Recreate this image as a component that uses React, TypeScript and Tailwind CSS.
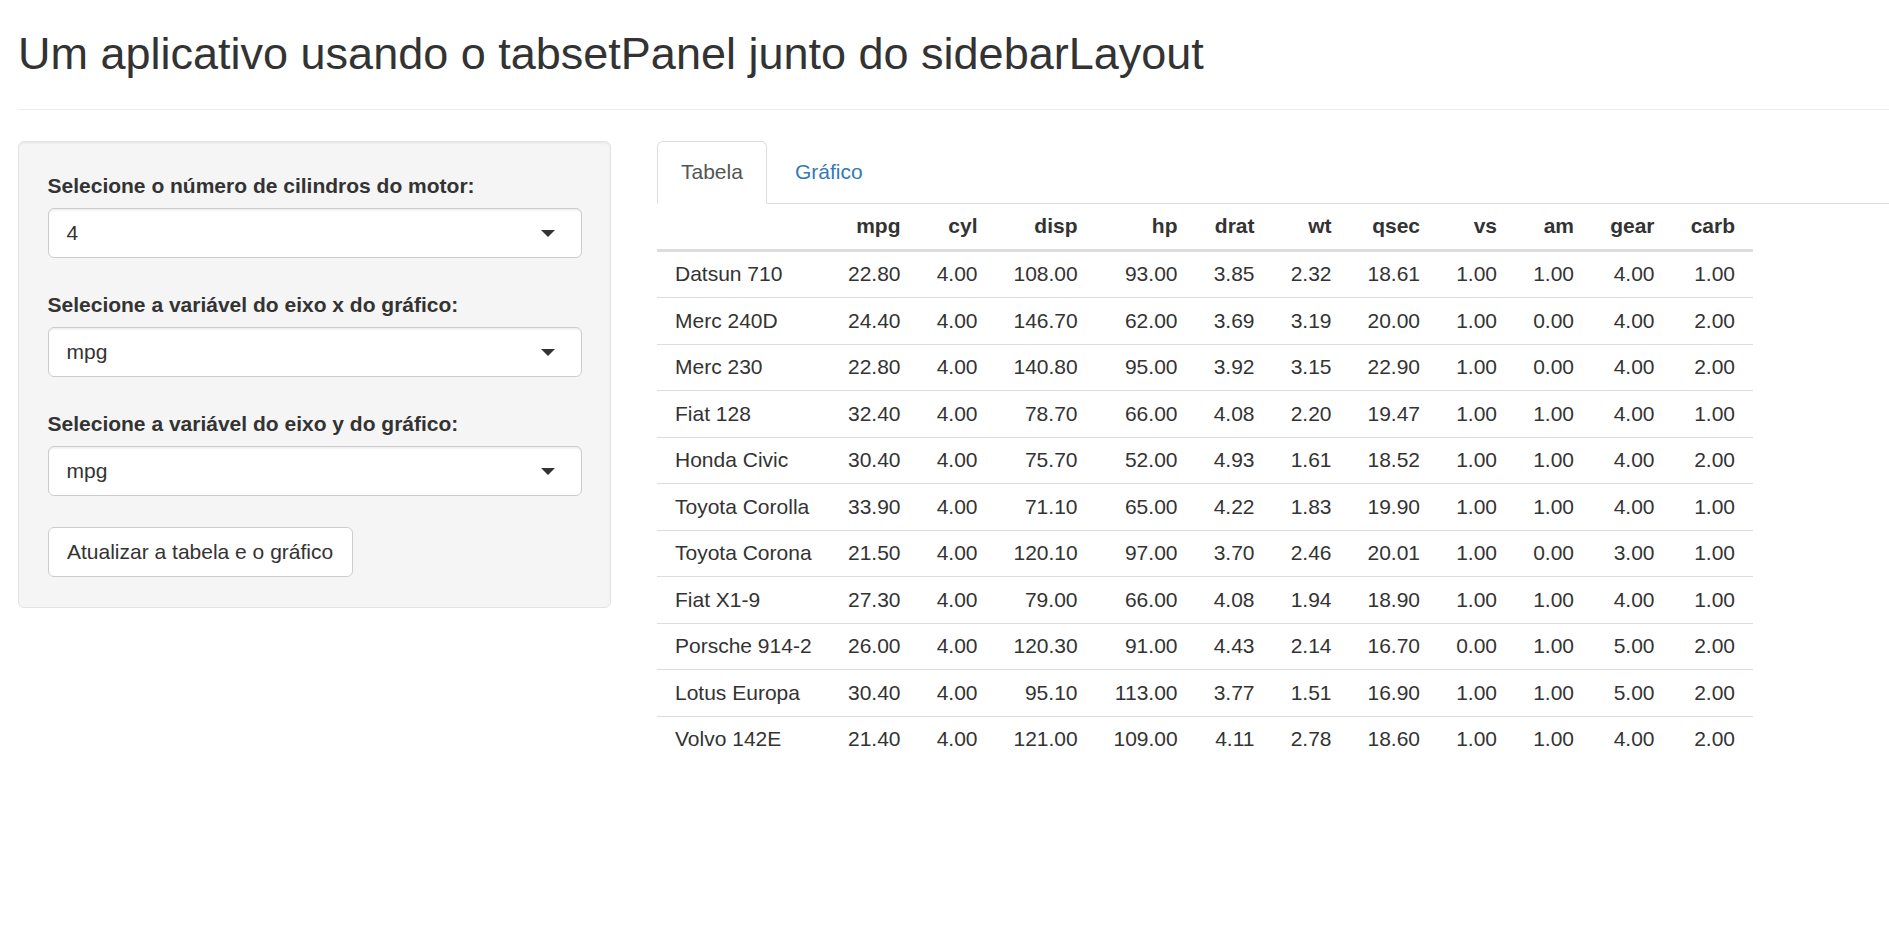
import React from "react";

const cols = ["mpg", "cyl", "disp", "hp", "drat", "wt", "qsec", "vs", "am", "gear", "carb"];

const rows: [string, string[]][] = [
  ["Datsun 710", ["22.80", "4.00", "108.00", "93.00", "3.85", "2.32", "18.61", "1.00", "1.00", "4.00", "1.00"]],
  ["Merc 240D", ["24.40", "4.00", "146.70", "62.00", "3.69", "3.19", "20.00", "1.00", "0.00", "4.00", "2.00"]],
  ["Merc 230", ["22.80", "4.00", "140.80", "95.00", "3.92", "3.15", "22.90", "1.00", "0.00", "4.00", "2.00"]],
  ["Fiat 128", ["32.40", "4.00", "78.70", "66.00", "4.08", "2.20", "19.47", "1.00", "1.00", "4.00", "1.00"]],
  ["Honda Civic", ["30.40", "4.00", "75.70", "52.00", "4.93", "1.61", "18.52", "1.00", "1.00", "4.00", "2.00"]],
  ["Toyota Corolla", ["33.90", "4.00", "71.10", "65.00", "4.22", "1.83", "19.90", "1.00", "1.00", "4.00", "1.00"]],
  ["Toyota Corona", ["21.50", "4.00", "120.10", "97.00", "3.70", "2.46", "20.01", "1.00", "0.00", "3.00", "1.00"]],
  ["Fiat X1-9", ["27.30", "4.00", "79.00", "66.00", "4.08", "1.94", "18.90", "1.00", "1.00", "4.00", "1.00"]],
  ["Porsche 914-2", ["26.00", "4.00", "120.30", "91.00", "4.43", "2.14", "16.70", "0.00", "1.00", "5.00", "2.00"]],
  ["Lotus Europa", ["30.40", "4.00", "95.10", "113.00", "3.77", "1.51", "16.90", "1.00", "1.00", "5.00", "2.00"]],
  ["Volvo 142E", ["21.40", "4.00", "121.00", "109.00", "4.11", "2.78", "18.60", "1.00", "1.00", "4.00", "2.00"]],
];

function SelectBox({ value }: { value: string }) {
  return (
    <div className="flex h-[50px] items-center justify-between rounded-[6px] border border-[#cccccc] bg-white pl-[18px] shadow-[inset_0_1.5px_1.5px_rgba(0,0,0,0.075)]">
      <span>{value}</span>
      <span className="mr-[26px] h-0 w-0 border-x-[7.5px] border-t-[7.5px] border-x-transparent border-t-[#333333]" />
    </div>
  );
}

export default function App() {
  return (
    <div className="min-h-screen bg-white pl-[18px] font-['Liberation_Sans',Arial,Helvetica,sans-serif] text-[21px] leading-[30px] text-[#333333]">
      <h1 className="pt-[29px] text-[45px] font-normal leading-[49.5px]">
        Um aplicativo usando o tabsetPanel junto do sidebarLayout
      </h1>
      <div className="mt-[30.5px] h-px bg-[#eeeeee]" />

      <div className="mt-[31px] flex items-start">
        <aside className="w-[593px] shrink-0 rounded-[6px] border border-[#e3e3e3] bg-[#f5f5f5] px-[28.5px] pb-[29.5px] pt-[28.5px] shadow-[inset_0_1.5px_1.5px_rgba(0,0,0,0.05)]">
          <label className="block font-bold">Selecione o número de cilindros do motor:</label>
          <div className="mt-[7.5px]">
            <SelectBox value="4" />
          </div>
          <label className="mt-[31.5px] block font-bold">Selecione a variável do eixo x do gráfico:</label>
          <div className="mt-[7.5px]">
            <SelectBox value="mpg" />
          </div>
          <label className="mt-[31.5px] block font-bold">Selecione a variável do eixo y do gráfico:</label>
          <div className="mt-[7.5px]">
            <SelectBox value="mpg" />
          </div>
          <button className="mt-[31px] h-[50px] rounded-[6px] border border-[#cccccc] bg-white px-[18.5px] text-[#333333]">
            Atualizar a tabela e o gráfico
          </button>
        </aside>

        <main className="ml-[46px] min-w-0 flex-1">
          <ul className="flex border-b border-[#dddddd]">
            <li className="-mb-px rounded-t-[6px] border border-[#dddddd] border-b-transparent bg-white px-[23px] py-[15px] text-[#555555]">
              Tabela
            </li>
            <li className="ml-[4px] border border-transparent px-[23px] py-[15px] text-[#337ab7]">
              Gráfico
            </li>
          </ul>

          <table className="w-[1096px] table-fixed border-collapse">
            <colgroup>
              <col className="w-[173px]" />
              <col className="w-[88.5px]" />
              <col className="w-[77px]" />
              <col className="w-[100px]" />
              <col className="w-[100px]" />
              <col className="w-[77px]" />
              <col className="w-[77px]" />
              <col className="w-[88.5px]" />
              <col className="w-[77px]" />
              <col className="w-[77px]" />
              <col className="w-[80.5px]" />
              <col className="w-[80.5px]" />
            </colgroup>
            <thead>
              <tr>
                <th className="border-b-[3px] border-[#dddddd] px-[18px] pb-[7.5px] pt-[7px] text-left font-bold" />
                {cols.map((c) => (
                  <th
                    key={c}
                    className="border-b-[3px] border-[#dddddd] px-[18px] pb-[7.5px] pt-[7px] text-right font-bold"
                  >
                    {c}
                  </th>
                ))}
              </tr>
            </thead>
            <tbody>
              {rows.map(([name, vals], i) => (
                <tr key={name} className={i > 0 ? "border-t border-[#dddddd]" : ""}>
                  <td className="px-[18px] py-[7.75px] text-left">{name}</td>
                  {vals.map((v, j) => (
                    <td key={j} className="px-[18px] py-[7.75px] text-right">
                      {v}
                    </td>
                  ))}
                </tr>
              ))}
            </tbody>
          </table>
        </main>
      </div>
    </div>
  );
}
